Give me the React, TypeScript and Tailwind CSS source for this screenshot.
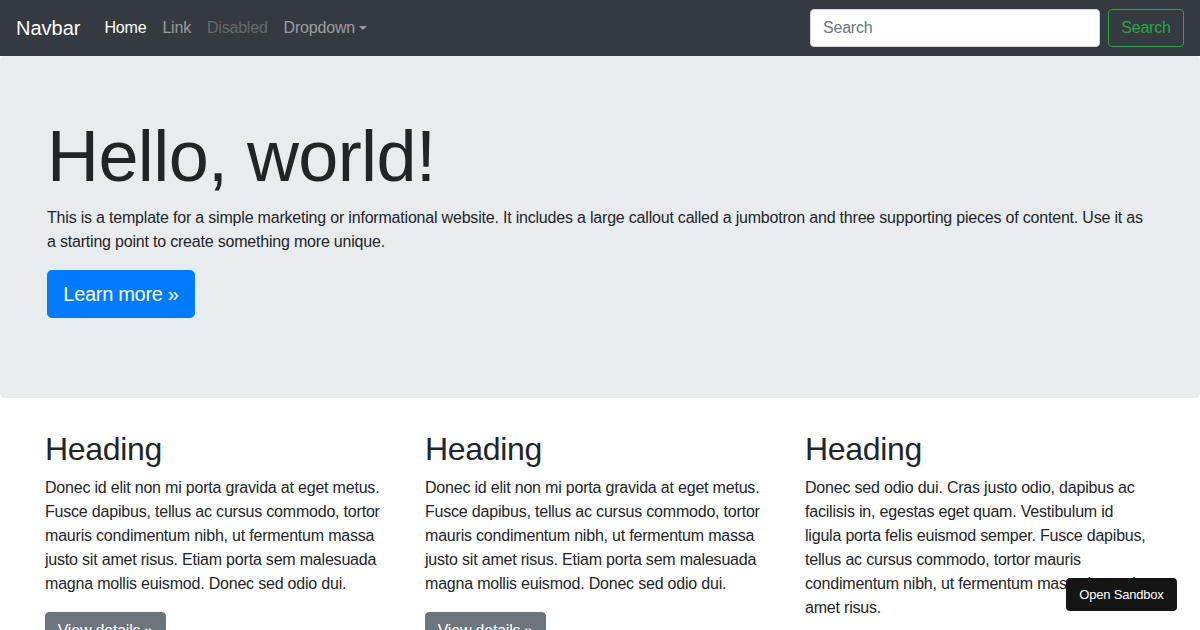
export default function App() {
  const columns = [
    "Donec id elit non mi porta gravida at eget metus. Fusce dapibus, tellus ac cursus commodo, tortor mauris condimentum nibh, ut fermentum massa justo sit amet risus. Etiam porta sem malesuada magna mollis euismod. Donec sed odio dui.",
    "Donec id elit non mi porta gravida at eget metus. Fusce dapibus, tellus ac cursus commodo, tortor mauris condimentum nibh, ut fermentum massa justo sit amet risus. Etiam porta sem malesuada magna mollis euismod. Donec sed odio dui.",
    "Donec sed odio dui. Cras justo odio, dapibus ac facilisis in, egestas eget quam. Vestibulum id ligula porta felis euismod semper. Fusce dapibus, tellus ac cursus commodo, tortor mauris condimentum nibh, ut fermentum massa justo sit amet risus.",
  ];

  return (
    <div className="relative h-[630px] w-[1200px] overflow-hidden bg-white font-['Liberation_Sans',Arial,sans-serif] text-base leading-6 tracking-[-0.2px] text-[#212529]">
      {/* navbar */}
      <nav className="flex h-14 items-center justify-between bg-[#343a40] px-4 py-2">
        <div className="flex items-center">
          <a className="mr-4 py-[5px] text-xl leading-[30px] tracking-normal text-white">Navbar</a>
          <ul className="flex items-center">
            <li className="px-2 py-2 text-white">Home</li>
            <li className="px-2 py-2 text-white/50">Link</li>
            <li className="px-2 py-2 text-white/25">Disabled</li>
            <li className="flex items-center px-2 py-2 text-white/50">
              Dropdown
              <span className="ml-[0.255em] inline-block h-0 w-0 border-x-[0.3em] border-t-[0.3em] border-x-transparent border-t-current" />
            </li>
          </ul>
        </div>
        <form className="flex items-center">
          <input
            type="text"
            placeholder="Search"
            className="mr-2 h-[38px] w-[290px] rounded border border-[#ced4da] bg-white px-3 py-1.5 text-base tracking-[-0.2px] text-[#495057] placeholder:text-[#6c757d]"
          />
          <button
            type="button"
            className="h-[38px] w-[76px] rounded border border-[#28a745] bg-transparent px-3 text-base tracking-[-0.2px] text-[#28a745]"
          >
            Search
          </button>
        </form>
      </nav>

      {/* jumbotron */}
      <div className="mb-8 rounded-[0.3rem] bg-[#e9ecef] px-8 py-16">
        <div className="mx-auto w-[1140px] px-[15px]">
          <h1 className="mb-[14px] text-[72px] font-light leading-[72px] tracking-[-0.6px]">Hello, world!</h1>
          <p className="mb-4 max-w-[1100px]">
            This is a template for a simple marketing or informational website. It includes a large callout called a
            jumbotron and three supporting pieces of content. Use it as a starting point to create something more
            unique.
          </p>
          <p className="mb-4">
            <button
              type="button"
              className="h-12 w-[148px] rounded-[0.3rem] border border-[#007bff] bg-[#007bff] text-xl leading-[30px] tracking-[-0.3px] text-white"
            >
              Learn more »
            </button>
          </p>
        </div>
      </div>

      {/* columns */}
      <div className="mx-auto w-[1140px] px-[15px]">
        <div className="-mx-[15px] grid grid-cols-3">
          {columns.map((text, i) => (
            <div key={i} className="px-[15px]">
              <h2 className="mb-2 text-[32px] font-medium leading-[1.2] tracking-[-0.3px]">Heading</h2>
              <p className={i === 2 ? "mb-4 max-w-[346px]" : "mb-4"}>{text}</p>
              <p>
                <button
                  type="button"
                  className="h-[38px] w-[121px] rounded border border-[#6c757d] bg-[#6c757d] text-base tracking-[-0.2px] text-white"
                >
                  View details »
                </button>
              </p>
            </div>
          ))}
        </div>
      </div>

      <div className="absolute bottom-[19px] right-[23px] flex h-[33px] w-[111px] items-center justify-center rounded bg-[#151515] text-[13px] tracking-[-0.2px] text-white">
        Open Sandbox
      </div>
    </div>
  );
}
